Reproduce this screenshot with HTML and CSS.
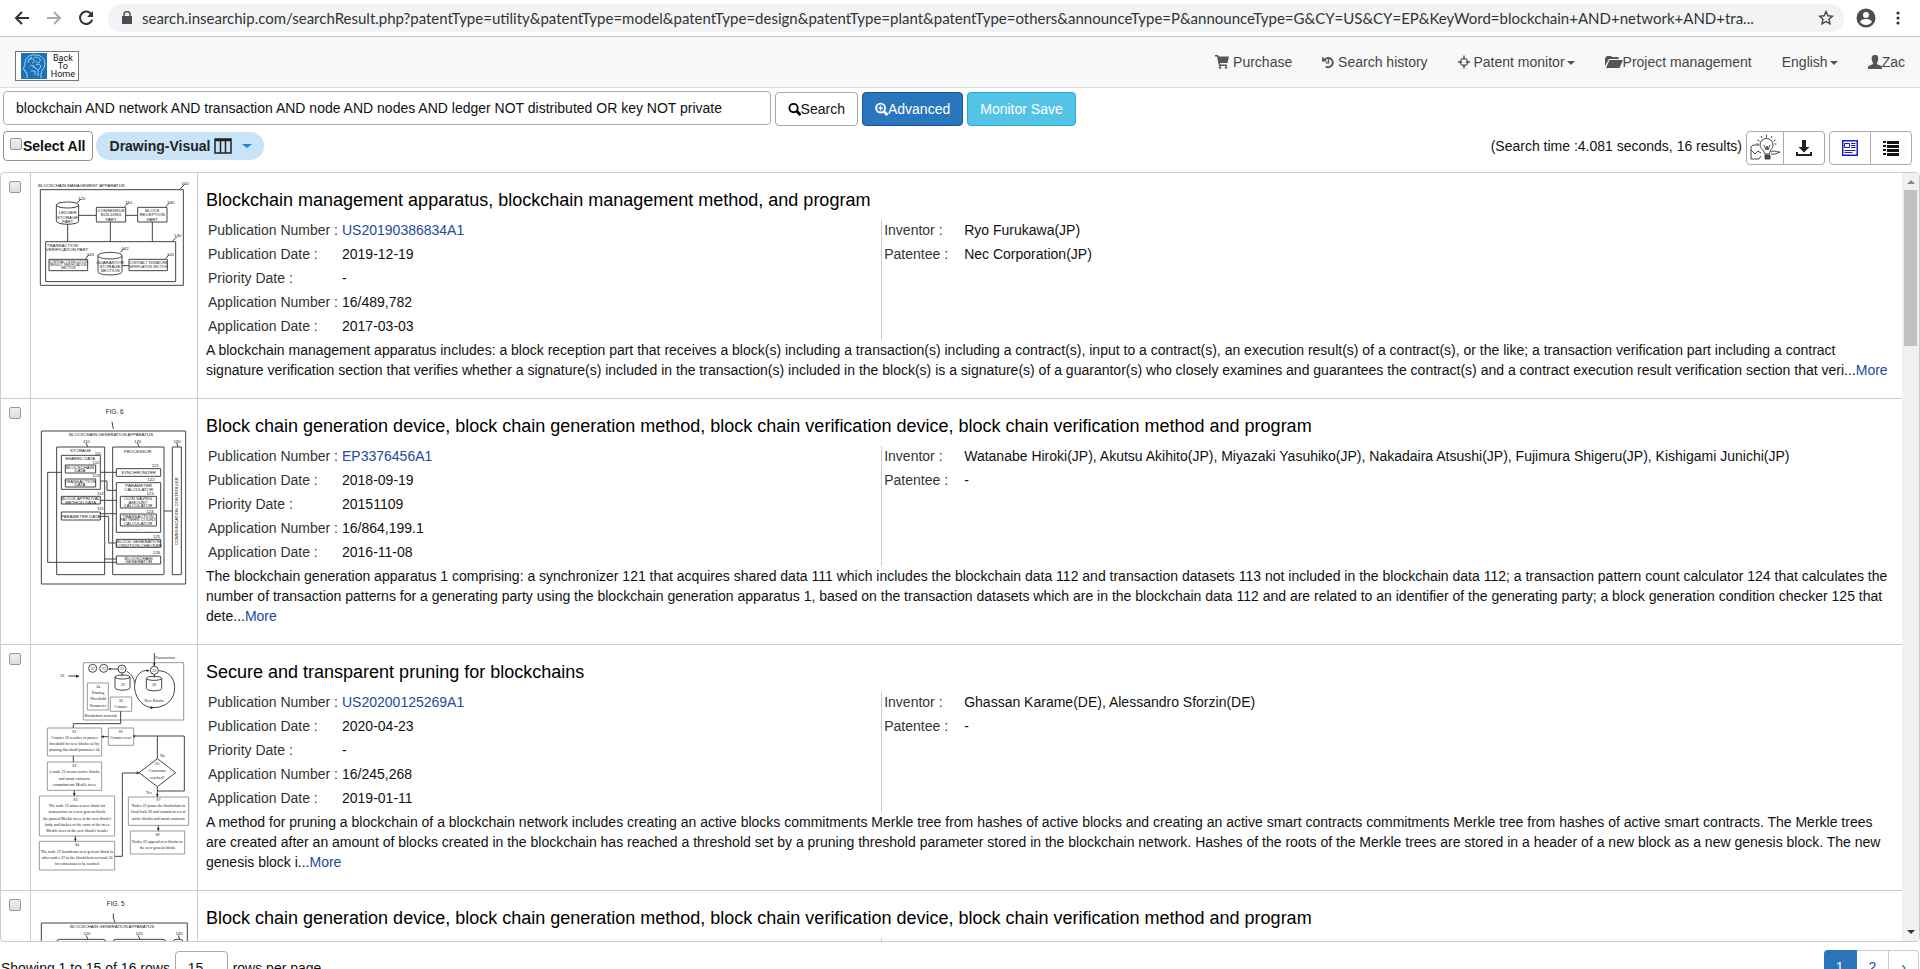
FILE: index.html
```html
<!DOCTYPE html>
<html lang="en">
<head>
    <meta charset="UTF-8">
    <meta name="viewport" content="width=device-width, initial-scale=1.0">
    <title>Search Result</title>
    <link rel="stylesheet" href="styles.css">
</head>
<body>
    <div class="browser-bar">
        <button class="bar-btn" aria-label="Back"><svg width="16" height="16" viewBox="0 0 16 16" fill="none" stroke="#333" stroke-width="2"><path d="M15 8H2M8 2L2 8l6 6"/></svg></button>
        <button class="bar-btn" aria-label="Forward"><svg width="16" height="16" viewBox="0 0 16 16" fill="none" stroke="#aaa" stroke-width="2"><path d="M1 8h13M8 2l6 6-6 6"/></svg></button>
        <button class="bar-btn" aria-label="Reload"><svg width="16" height="16" viewBox="0 0 16 16" fill="none" stroke="#333" stroke-width="2"><path d="M13.500 4.500A6.200 6.200 0 1 0 14.200 9.500"/><path d="M15 1v6H9z" fill="#333" stroke="none"/></svg></button>
        <div class="url-box">
            <svg width="10" height="14" viewBox="0 0 10 14"><path d="M0 5h10v8H0z" fill="#4a4d51"/><path d="M2 6V3.500a3 3 0 0 1 6 0V6" fill="none" stroke="#4a4d51" stroke-width="1.500"/></svg>
            <span class="url">search.insearchip.com/searchResult.php?patentType=utility&amp;patentType=model&amp;patentType=design&amp;patentType=plant&amp;patentType=others&amp;announceType=P&amp;announceType=G&amp;CY=US&amp;CY=EP&amp;KeyWord=blockchain+AND+network+AND+tra...</span>
            <svg width="16" height="16" viewBox="0 0 16 16" fill="none" stroke="#444" stroke-width="1.400"><path d="M8 1.500l1.900 4.300 4.600.4-3.500 3.100 1 4.600L8 11.500l-4 2.400 1-4.600L1.500 6.200l4.600-.4z"/></svg>
        </div>
        <button class="bar-btn" aria-label="Profile"><svg width="20" height="20" viewBox="0 0 20 20"><circle cx="10" cy="10" r="9.500" fill="#4a4d51"/><circle cx="10" cy="7" r="3" fill="#fff"/><path d="M4 14c1-4 11-4 12 0-3 4-9 4-12 0z" fill="#fff"/></svg></button>
        <button class="bar-btn" aria-label="Menu"><svg width="4" height="16" viewBox="0 0 4 16" fill="#333"><circle cx="2" cy="3" r="1.600"/><circle cx="2" cy="8" r="1.600"/><circle cx="2" cy="13" r="1.600"/></svg></button>
    </div>

    <header class="navbar">
        <a href="#" class="home">
            <svg width="26" height="26" viewBox="0 0 26 26">
                <path d="M0 0h26v26H0z" fill="#1a73b8"/>
                <g fill="none" stroke="#a9cfe9" stroke-width="1"><path d="M6 25v-5l-2-1v-2l-2-1 2-4C3 5 9 1 15 2c6 0 9 5 9 9 0 5-4 6-4 10v4M7 10c0-3 3-5 5-4s1 4-1 4M13 5c3-2 7 0 6 3s-4 2-4 0M9 13c2-2 4 0 3 2M15 12c3-2 6 0 4 3s-4 1-4 0M10 18h4v4M17 17v6M7 7l4-3M12 12l3 4"/></g>
            </svg>
            <span>Back<br>To<br>Home</span>
        </a>
        <nav>
            <a href="#"><svg width="14" height="14" viewBox="0 0 14 14" fill="#555"><path d="M0 0h3l.8 1.500H14L12.500 8H5l.3 1.500H12V11H4L2 1.500H0z"/><circle cx="5" cy="12.500" r="1.200"/><circle cx="11" cy="12.500" r="1.200"/></svg> Purchase</a>
            <a href="#"><svg width="12" height="14" viewBox="0 0 13 14" fill="none" stroke="#555" stroke-width="2"><path d="M2.500 5A5 5 0 1 1 4 11.800"/><path d="M0 1v5.500h5.500z" fill="#555" stroke="none"/><path d="M7 4v4H4" stroke-width="1.500"/></svg> Search history</a>
            <a href="#"><svg width="12" height="14" viewBox="0 0 13 14" fill="none" stroke="#555" stroke-width="1.500"><circle cx="6.500" cy="7" r="3.900"/><path d="M6.500 0v4.500M6.500 9.500V14M0 7h4.500M8.500 7H13"/></svg> Patent monitor<i class="caret"></i></a>
            <a href="#"><svg width="18" height="14" viewBox="0 0 18 14" fill="#555"><path d="M0 11V3l2-2h4l1 1h6l1 2H4z"/><path d="M4.500 5H18l-3.500 8H1z"/></svg>Project management</a>
            <a href="#">English<i class="caret"></i></a>
            <a href="#"><svg width="14" height="14" viewBox="0 0 14 14" fill="#555"><path d="M7 0c3 0 3.500 2 3.200 4.500C10 6.500 9 7 9 9c1 1 5 1.500 5 3v2H0v-2c0-1.500 4-2 5-3 0-2-1-2.500-1.200-4.500C3.500 2 4 0 7 0z"/></svg>Zac</a>
        </nav>
    </header>

    <form class="search">
        <input type="text" class="keyword" aria-label="Keyword" value="blockchain AND network AND transaction AND node AND nodes AND ledger NOT distributed OR key NOT private">
        <button type="button" class="btn"><svg width="13" height="14" viewBox="0 0 14 14" fill="none" stroke="#000" stroke-width="2"><circle cx="6" cy="6" r="4.500"/><path d="M9 9l4.500 4.500" stroke-width="3"/></svg>Search</button>
        <button type="button" class="btn btn-primary"><svg width="13" height="14" viewBox="0 0 14 14" fill="none" stroke="#fff" stroke-width="2"><circle cx="6" cy="6" r="4.800"/><path d="M9 9l4.500 4.500" stroke-width="3"/><path d="M6 3.500v5M3.500 6h5" stroke-width="1.500"/></svg>Advanced</button>
        <button type="button" class="btn btn-info">Monitor Save</button>
    </form>

    <div class="toolbar">
        <label class="select-all"><input type="checkbox">Select All</label>
        <button type="button" class="visual">Drawing-Visual
            <svg width="18" height="16" viewBox="0 0 18 16" fill="none" stroke="#222" stroke-width="1.500"><path d="M1 1h16v14H1zM6.500 1v14M11.500 1v14M1 2.500h16"/></svg>
            <i class="caret"></i>
        </button>
        <span class="result-info">(Search time :4.081 seconds, 16 results)</span>
        <div class="btn-group">
            <button type="button" class="btn btn-idea" aria-label="Ideas"><svg width="30" height="26" viewBox="0 0 30 26" fill="none" stroke="#444"><path d="M10 10a6.500 6.500 0 1 1 13 0c0 4-3 4-3.500 9h-5C14 14 10 14 10 10zM14 10l2 5 1-4 1 4 2-5"/><path d="M15 20h5v4h-5z" fill="#444"/><path d="M16.500 0v2.500M11 1l1 2M22 1l-1 2M7.500 5l2 1M25.500 5l-2 1M6.500 9h2M24.500 9h2"/><path d="M9 10H3L1 12v12h8l2-3M1 15l4 4 3-3 3 2M21 17c3-2 5 0 9 0-3 1-5 3-9 2"/></svg></button>
            <button type="button" class="btn" aria-label="Download"><svg width="16" height="16" viewBox="0 0 16 16" fill="#222"><path d="M6 0h4v7h3.500L8 12.500 2.500 7H6zM0 12h2v2h12v-2h2v4H0z"/></svg></button>
        </div>
        <div class="btn-group">
            <button type="button" class="btn" aria-label="Detail view"><svg width="16" height="16" viewBox="0 0 16 16" fill="none" stroke="#1a1acb"><path d="M.75.75h14.500v14.500H.75z" stroke-width="1.500"/><path d="M2.500 3.500h5v4h-5zM9 3.500h4.500M9 5.500h4.500M9 7.500h4.500M2.500 10.500h11M2.500 12.500h8"/></svg></button>
            <button type="button" class="btn" aria-label="List view"><svg width="16" height="16" viewBox="0 0 16 16" fill="#111"><path d="M0 1h3v2H0zM4 1h12v3H4zM0 5h3v2H0zM4 5h12v3H4zM0 9h3v2H0zM4 9h12v3H4zM0 13h3v2H0zM4 13h12v3H4z"/></svg></button>
        </div>
    </div>

    <div class="result-box">
        <div class="result-scroll">
            <table class="results">
                <tr>
                    <td class="pick"><input type="checkbox" aria-label="Select row 1"></td>
                    <td class="drawing">
                        <svg viewBox="93 12 498 360">
                            <path d="M121 62h429v287H121zM137 218h390v120H137zM289 115h88v44h-88zM413 115h88v44h-88zM147 271h116v34H147zM387 271h115v34H387z"/>
                            <path d="M169 108v48c0 13 67 13 67 0v-48M169 108c0-12 67-12 67 0s-67 12-67 0M294 260v48c0 13 72 13 72 0v-48M294 260c0-13 72-13 72 0s-72 13-72 0"/>
                            <path d="M203 165v53M331 159v59M457 159v59M236 139h53M377 139h36M366 290h21M540 60l14-14M232 102l10-12M374 113l12-12M497 113l12-12M518 216l12-12M257 269l10-12M362 250l10-12M497 269l10-12"/>
                            <g class="cap">
                                <text x="244" y="55">BLOCKCHAIN MANAGEMENT APPARATUS</text>
                                <text x="203" y="136">LEDGER</text><text x="203" y="149">STORAGE</text><text x="203" y="162">PART</text>
                                <text x="333" y="129">CONSENSUS</text><text x="333" y="142">BUILDING</text><text x="333" y="155">PART</text>
                                <text x="457" y="129">BLOCK</text><text x="457" y="142">RECEPTION</text><text x="457" y="155">PART</text>
                                <text x="187" y="234">TRANSACTION</text><text x="201" y="247">VERIFICATION PART</text>
                                <text x="330" y="284">GUARANTOR</text><text x="330" y="296">STORAGE</text><text x="330" y="308">SECTION</text>
                                <text x="555" y="49">100</text><text x="245" y="94">120</text><text x="386" y="104">110</text><text x="512" y="104">130</text><text x="533" y="205">140</text><text x="271" y="260">143</text><text x="375" y="243">142</text><text x="512" y="260">141</text>
                            </g>
                            <g class="cap tiny">
                                <text x="205" y="281">CONTRACT EXECUTION</text><text x="205" y="291">RESULT VERIFICATION</text><text x="205" y="301">SECTION</text>
                                <text x="445" y="286">CONTRACT SIGNATURE</text><text x="445" y="298">VERIFICATION SECTION</text>
                            </g>
                        </svg>
                    </td>
                    <td class="detail">
                        <h4>Blockchain management apparatus, blockchain management method, and program</h4>
                        <div class="meta">
                            <dl>
                                <dt>Publication Number :</dt><dd><a href="#">US20190386834A1</a></dd>
                                <dt>Publication Date :</dt><dd>2019-12-19</dd>
                                <dt>Priority Date :</dt><dd>-</dd>
                                <dt>Application Number :</dt><dd>16/489,782</dd>
                                <dt>Application Date :</dt><dd>2017-03-03</dd>
                            </dl>
                            <dl class="people">
                                <dt>Inventor :</dt><dd>Ryo Furukawa(JP)</dd>
                                <dt>Patentee :</dt><dd>Nec Corporation(JP)</dd>
                            </dl>
                        </div>
                        <p>A blockchain management apparatus includes: a block reception part that receives a block(s) including a transaction(s) including a contract(s), input to a contract(s), an execution result(s) of a contract(s), or the like; a transaction verification part including a contract signature verification section that verifies whether a signature(s) included in the transaction(s) included in the block(s) is a signature(s) of a guarantor(s) who closely examines and guarantees the contract(s) and a contract execution result verification section that veri...<a href="#">More</a></p>
                    </td>
                </tr>
                <tr>
                    <td class="pick"><input type="checkbox" aria-label="Select row 2"></td>
                    <td class="drawing">
                        <svg viewBox="93 16 498 570">
                            <path d="M124 112h433v459H124zM170 160h144v383H170zM338 160h154v383H338zM517 160h27v383h-27z"/>
                            <path d="M184 185h117v102H184zM196 214h91v24h-91zM196 256h91v24h-91zM184 308h117v23H184zM184 355h117v24H184zM349 225h133v23H349zM349 267h133v149H349zM361 308h108v35H361zM361 361h108v36H361zM349 437h133v24H349zM349 487h133v24H349z"/>
                            <path d="M184 236h-41v270h206M301 236h48M301 262h20v28h28M301 320h48M301 360h48M301 368h25v80h23M314 496h35M492 352h25M336 84l4 22M258 148l6 12M412 148l6 12M530 148l4 12"/>
                            <g class="cap">
                                <text x="333" y="127">BLOCKCHAIN GENERATION APPARATUS</text>
                                <text x="259" y="147">110</text><text x="413" y="147">120</text><text x="531" y="147">130</text>
                                <text x="242" y="176">STORAGE</text><text x="413" y="179">PROCESSOR</text><text x="240" y="199">SHARED DATA</text>
                                <text x="240" y="225">BLOCKCHAIN</text><text x="240" y="236">DATA</text><text x="240" y="267">TRANSACTION</text><text x="240" y="278">DATA</text>
                                <text x="242" y="319">BLOCK APPROVAL</text><text x="242" y="330">METHOD DATA</text><text x="242" y="372">PARAMETER DATA</text>
                                <text x="416" y="242">SYNCHRONIZER</text><text x="416" y="280">PARAMETER</text><text x="416" y="291">CALCULATOR</text>
                                <text x="414" y="319">COIN SAVING</text><text x="414" y="330">AMOUNT</text><text x="414" y="341">CALCULATOR</text>
                                <text x="414" y="372">TRANSACTION</text><text x="414" y="383">PATTERN COUNT</text><text x="414" y="394">CALCULATOR</text><text x="414" y="408">.....</text>
                                <text x="416" y="448">BLOCK GENERATION</text><text x="416" y="459">CONDITION CHECKER</text><text x="416" y="498">BLOCKCHAIN</text><text x="416" y="509">GENERATOR</text>
                                <text x="294" y="183">111</text><text x="288" y="210">112</text><text x="288" y="251">113</text><text x="301" y="304">114</text><text x="301" y="350">115</text>
                                <text x="466" y="219">121</text><text x="453" y="263">122</text><text x="450" y="304">123</text><text x="450" y="357">124</text><text x="470" y="433">125</text><text x="470" y="482">126</text>
                                <text transform="translate(535 352) rotate(-90)">COMMUNICATION CONTROLLER</text>
                            </g>
                            <text class="fig" x="344" y="60">FIG. 6</text>
                        </svg>
                    </td>
                    <td class="detail">
                        <h4>Block chain generation device, block chain generation method, block chain verification device, block chain verification method and program</h4>
                        <div class="meta">
                            <dl>
                                <dt>Publication Number :</dt><dd><a href="#">EP3376456A1</a></dd>
                                <dt>Publication Date :</dt><dd>2018-09-19</dd>
                                <dt>Priority Date :</dt><dd>20151109</dd>
                                <dt>Application Number :</dt><dd>16/864,199.1</dd>
                                <dt>Application Date :</dt><dd>2016-11-08</dd>
                            </dl>
                            <dl class="people">
                                <dt>Inventor :</dt><dd>Watanabe Hiroki(JP), Akutsu Akihito(JP), Miyazaki Yasuhiko(JP), Nakadaira Atsushi(JP), Fujimura Shigeru(JP), Kishigami Junichi(JP)</dd>
                                <dt>Patentee :</dt><dd>-</dd>
                            </dl>
                        </div>
                        <p>The blockchain generation apparatus 1 comprising: a synchronizer 121 that acquires shared data 111 which includes the blockchain data 112 and transaction datasets 113 not included in the blockchain data 112; a transaction pattern count calculator 124 that calculates the number of transaction patterns for a generating party using the blockchain generation apparatus 1, based on the transaction datasets which are in the blockchain data 112 and are related to an identifier of the generating party; a block generation condition checker 125 that dete...<a href="#">More</a></p>
                    </td>
                </tr>
                <tr>
                    <td class="pick"><input type="checkbox" aria-label="Select row 3"></td>
                    <td class="drawing">
                        <svg viewBox="93 19 498 687">
                            <path class="light" d="M250 72h301v172H250zM262 133h63v81h-63zM331 175h64v43h-64zM142 268h163v84H142zM325 268h76v52h-76zM142 370h163v85H142zM118 472h226v120H118zM118 608h226v86H118zM385 475h181v85H385zM391 577h163v69H391z"/>
                            <path d="M345 115v32c0 10 45 10 45 0v-32M345 115c0-8 45-8 45 0s-45 8-45 0M439 119v30c0 10 46 10 46 0v-30M439 119c0-8 46-8 46 0s-46 8-46 0M472 360l55 42-55 42-55-42z"/>
                            <circle cx="278" cy="89" r="12"/><circle cx="311" cy="89" r="12"/><circle cx="366" cy="91" r="12"/><circle cx="463" cy="95" r="12"/>
                            <path d="M463 43v40M366 103v10M463 107v10M354 91h-26M380 98c14 8 22 20 24 36M447 96c-30-6-45 25-43 55 4 30 25 55 55 56 40 0 65-25 65-60 0-30-20-50-48-51M205 112h32M362 218v37H220v13M220 352v18M223 455v17M226 592v16M325 294h-20M401 292h152v165h-81M472 292v68M472 444v31M475 560v17M344 653h23V403h50"/>
                            <path class="arrow" d="M459 74h8l-4 9zM228 108l10 5-10 4zM219 463h8l-4 9zM468 466h8l-4 9zM471 568h8l-4 9zM222 600h8l-4 8zM410 398l8 5-8 4zM405 288l-6 4 6 5zM311 290l-7 4 7 5zM332 87l-8 4 8 4zM440 92l8 4-8 4zM452 202l8 5-8 5z"/>
                            <g class="cap serif">
                                <text x="495" y="61">Transactions</text><text x="187" y="114">20</text><text x="278" y="93">22</text><text x="311" y="93">22</text><text x="366" y="95">22</text><text x="463" y="99">22</text><text x="368" y="141">26</text><text x="462" y="143">28</text>
                                <text x="294" y="147">24</text><text x="294" y="165">Pruning</text><text x="294" y="185">Threshold</text><text x="294" y="204">Parameter</text>
                                <text x="362" y="189">36</text><text x="362" y="208">Counter</text><text x="462" y="190">New Blocks</text><text x="302" y="236">Blockchain network</text>
                                <text x="223" y="283">S1</text><text x="223" y="302">Counter 26 reaches or passes</text><text x="223" y="320">threshold for new blocks set by</text><text x="223" y="338">pruning threshold parameter 24</text>
                                <text x="362" y="283">S6</text><text x="362" y="302">Counter reset</text>
                                <text x="223" y="384">S2</text><text x="223" y="404">A node 22 creates active blocks</text><text x="223" y="423">and smart contracts</text><text x="223" y="441">commitments Merkle trees</text>
                                <text x="226" y="486">S3</text><text x="231" y="505">The node 22 mines a new block for</text><text x="231" y="524">transactions as a new genesis block</text><text x="231" y="543">the pruned Merkle trees in the new block's</text><text x="231" y="562">body and hashes of the roots of the trees</text><text x="231" y="581">Merkle trees in the new block's header</text>
                                <text x="231" y="622">S4</text><text x="231" y="642">The node 22 broadcasts new genesis block to</text><text x="231" y="661">other nodes 22 in the blockchain network 20</text><text x="231" y="680">for consensus to be reached</text>
                                <text x="472" y="380">S5</text><text x="472" y="400">Consensus</text><text x="472" y="420">reached?</text><text x="487" y="355">No</text><text x="447" y="467">Yes</text>
                                <text x="475" y="488">S7</text><text x="475" y="505">Nodes 22 prune the blockchain in</text><text x="475" y="524">local lock 28 and commit to set of</text><text x="475" y="544">active blocks and smart contracts</text>
                                <text x="472" y="592">S8</text><text x="472" y="612">Nodes 22 append new blocks to</text><text x="472" y="632">the new genesis block</text>
                            </g>
                        </svg>
                    </td>
                    <td class="detail">
                        <h4>Secure and transparent pruning for blockchains</h4>
                        <div class="meta">
                            <dl>
                                <dt>Publication Number :</dt><dd><a href="#">US20200125269A1</a></dd>
                                <dt>Publication Date :</dt><dd>2020-04-23</dd>
                                <dt>Priority Date :</dt><dd>-</dd>
                                <dt>Application Number :</dt><dd>16/245,268</dd>
                                <dt>Application Date :</dt><dd>2019-01-11</dd>
                            </dl>
                            <dl class="people">
                                <dt>Inventor :</dt><dd>Ghassan Karame(DE), Alessandro Sforzin(DE)</dd>
                                <dt>Patentee :</dt><dd>-</dd>
                            </dl>
                        </div>
                        <p>A method for pruning a blockchain of a blockchain network includes creating an active blocks commitments Merkle tree from hashes of active blocks and creating an active smart contracts commitments Merkle tree from hashes of active smart contracts. The Merkle trees are created after an amount of blocks created in the blockchain has reached a threshold set by a pruning threshold parameter stored in the blockchain network. Hashes of the roots of the Merkle trees are stored in a header of a new block as a new genesis block. The new genesis block i...<a href="#">More</a></p>
                    </td>
                </tr>
                <tr>
                    <td class="pick"><input type="checkbox" aria-label="Select row 4"></td>
                    <td class="drawing">
                        <svg viewBox="93 757 498 570">
                            <path d="M124 853h438v459H124zM170 910q0-8 8-8h131q8 0 8 8v370H170zM340 910q0-8 8-8h141q8 0 8 8v370H340zM520 910q0-8 8-8h13q8 0 8 8v370h-29z"/>
                            <path d="M340 824v14l5 13M258 890l6 12M414 890l6 12M535 890l4 12"/>
                            <g class="cap">
                                <text x="336" y="868">BLOCKCHAIN GENERATION APPARATUS</text>
                                <text x="261" y="888">110</text><text x="417" y="888">120</text><text x="537" y="888">130</text>
                            </g>
                            <text class="fig" x="347" y="801">FIG. 5</text>
                        </svg>
                    </td>
                    <td class="detail">
                        <h4>Block chain generation device, block chain generation method, block chain verification device, block chain verification method and program</h4>
                        <div class="meta">
                            <dl></dl>
                            <dl class="people"></dl>
                        </div>
                    </td>
                </tr>
            </table>
        </div>
        <div class="scrollbar">
            <i class="arrow-up"></i>
            <div class="thumb"></div>
            <i class="arrow-down"></i>
        </div>
    </div>

    <footer class="pager">
        <label>Showing 1 to 15 of 16 rows
            <select><option>15</option></select>
            rows per page</label>
        <div class="pages">
            <a href="#" class="active">1</a><a href="#">2</a><a href="#">›</a>
        </div>
    </footer>
</body>
</html>
```

FILE: styles.css
```css
* {
    box-sizing: border-box;
}

body {
    margin: 0;
    height: 100vh;
    overflow: hidden;
    font-family: "Liberation Sans", Arial, sans-serif;
    font-size: 14px;
    line-height: 20px;
    color: #111;
    background-color: #fff;
}

a {
    color: #2349a0;
    text-decoration: none;
}

button, input, select {
    font-family: inherit;
    font-size: 14px;
    color: #111;
}

svg {
    flex: none;
}

/* browser bar */
.browser-bar {
    display: flex;
    align-items: center;
    height: 37px;
    padding: 0 20px 0 14px;
    gap: 16px;
    border-bottom: 1px solid #c5c7cf;
}

.bar-btn {
    display: flex;
    padding: 0;
    border: none;
    background: none;
}

.url-box {
    display: flex;
    flex: 1;
    align-items: center;
    height: 28px;
    min-width: 0;
    margin: 0 -4px 0 -2px;
    padding: 0 10px 0 14px;
    gap: 10px;
    border-radius: 14px;
    background-color: #f1f3f4;
}

.url-box + .bar-btn {
    margin-right: 4px;
}

.url {
    flex: 1;
    overflow: hidden;
    white-space: nowrap;
    font-family: Lato, "Open Sans", sans-serif;
    font-size: 15px;
    color: #333;
}

/* navbar */
.navbar {
    display: flex;
    align-items: center;
    justify-content: space-between;
    height: 51px;
    padding: 0 15px;
    background-color: #f8f8f8;
    border-bottom: 1px solid #dcdcdc;
}

.home {
    display: flex;
    align-items: center;
    justify-content: space-between;
    width: 64px;
    height: 30px;
    margin-top: 8px;
    padding: 0 3px 0 5px;
    border: 1px solid #777;
    background-color: #fff;
    font-family: Roboto, sans-serif;
    font-size: 9px;
    line-height: 8px;
    text-align: center;
    color: #111;
}

.navbar nav {
    display: flex;
    gap: 30px;
}

.navbar nav a {
    color: #444;
    white-space: nowrap;
}

.navbar nav svg {
    vertical-align: -2px;
}

.caret {
    display: inline-block;
    margin-left: 2px;
    vertical-align: middle;
    border-top: 4px solid #555;
    border-left: 4px solid transparent;
    border-right: 4px solid transparent;
}

/* search form */
.search {
    display: flex;
    gap: 4px;
    padding: 3px;
}

.keyword {
    width: calc(40% + 2px);
    height: 34px;
    padding: 0 12px;
    border: 1px solid #aaa;
    border-radius: 4px;
}

.btn {
    display: flex;
    align-items: center;
    justify-content: center;
    height: 34px;
    margin-top: 1px;
    padding: 0 12px;
    border: 1px solid #aaa;
    border-radius: 4px;
    background-color: #fff;
}

.btn-primary {
    color: #fff;
    background-color: #2a76bd;
    border-color: #14559a;
}

.btn-info {
    color: #fff;
    background-color: #55c3e6;
    border-color: #21aed8;
}

/* toolbar */
.toolbar {
    display: flex;
    align-items: flex-start;
    padding: 2px 8px 7px 3px;
}

.select-all {
    display: flex;
    height: 30px;
    margin: 0 3px 0 0;
    padding: 4px 6px;
    line-height: 20px;
    font-weight: bold;
    border: 1px solid #9c8f8f;
    border-radius: 4px;
}

input[type="checkbox"] {
    appearance: none;
    width: 12px;
    height: 12px;
    margin: 0;
    border: 1px solid #999;
    border-radius: 2px;
    background: linear-gradient(#eee, #ddd);
}

.select-all input[type="checkbox"] {
    margin: 2px 1px 0 0;
}

.visual {
    display: flex;
    align-items: center;
    height: 28px;
    margin-top: 1px;
    padding: 0 12px 0 14px;
    gap: 4px;
    border: none;
    border-radius: 14px;
    font-weight: bold;
    color: #222;
    background-color: #c9e3f7;
}

.visual .caret {
    margin-left: 6px;
    border-top-color: #1d86d6;
    border-width: 4px 5px 0;
}

.result-info {
    margin: 5px 4px 0 auto;
}

.btn-group {
    display: flex;
}

.btn-group + .btn-group {
    margin-left: 4px;
}

.btn-group .btn {
    width: 42px;
    margin: 0;
    padding: 0;
}

.btn-group .btn-idea {
    width: 38px;
}

.btn-group .btn:first-child {
    border-radius: 4px 0 0 4px;
}

.btn-group .btn:last-child {
    margin-left: -1px;
    border-radius: 0 4px 4px 0;
}

/* result table */
.result-box {
    display: flex;
    height: calc(100vh - 199px);
    overflow: hidden;
    border: 1px solid #ccc;
    border-radius: 4px;
}

.result-scroll {
    flex: 1;
    overflow: hidden;
}

.results {
    width: 100%;
    table-layout: fixed;
    border-spacing: 0;
}

.results td {
    padding: 0;
    vertical-align: top;
    border-bottom: 1px solid #ccc;
    border-right: 1px solid #ccc;
}

.results .pick {
    width: 30px;
    padding: 8px;
    line-height: 12px;
}

.results .drawing {
    width: 167px;
}

.results .detail {
    padding: 17px 8px 18px;
    border-right: none;
}

.drawing svg {
    display: block;
    width: 100%;
    fill: none;
    stroke: #444;
    stroke-width: 3;
}

.drawing .light {
    stroke: #999;
}

.drawing .arrow {
    fill: #222;
    stroke: none;
}

.drawing text {
    fill: #222;
    stroke: none;
    text-anchor: middle;
}

.drawing .cap text {
    font-size: 13px;
}

.drawing .tiny text {
    font-size: 10px;
}

.drawing .serif text {
    font-family: "Liberation Serif", serif;
    font-size: 12px;
}

.drawing .fig {
    font-size: 19px;
}

.detail h4 {
    margin: 0 0 10px;
    font-size: 18px;
    font-weight: normal;
    line-height: 20px;
    color: #000;
}

.meta {
    display: grid;
    grid-template-columns: 2fr 3fr;
    min-height: 120px;
}

.meta dl {
    display: grid;
    grid-template-columns: 134px 1fr;
    grid-auto-rows: 24px;
    margin: 0;
    padding-left: 2px;
}

.meta .people {
    grid-template-columns: 80px 1fr;
    border-left: 1px solid #ccc;
}

.meta dt {
    color: #333;
}

.meta dd {
    margin: 0;
}

.detail p {
    margin: 0;
}

.scrollbar {
    display: flex;
    flex-direction: column;
    align-items: center;
    width: 17px;
    padding: 7px 0;
    background-color: #f1f1f1;
}

.thumb {
    width: 13px;
    height: 156px;
    margin: 6px 0 auto;
    background-color: #c1c1c1;
}

.arrow-up {
    border-bottom: 4px solid #888;
    border-left: 4px solid transparent;
    border-right: 4px solid transparent;
}

.arrow-down {
    border-top: 4px solid #333;
    border-left: 4px solid transparent;
    border-right: 4px solid transparent;
}

/* pager */
.pager {
    display: flex;
    justify-content: space-between;
    padding: 8px 1px;
}

.pager select {
    appearance: none;
    width: 53px;
    height: 34px;
    margin: 1px 1px 0;
    padding: 0 12px;
    border: 1px solid #aaa;
    border-radius: 4px;
    background-color: #fff;
}

.pages {
    display: flex;
}

.pages a {
    height: 34px;
    padding: 6px 12px;
    border: 1px solid #ccc;
    border-left: none;
}

.pages a:last-child {
    border-radius: 0 4px 4px 0;
}

.pages .active {
    color: #fff;
    background-color: #2a76bd;
    border-color: #2a76bd;
    border-radius: 4px 0 0 4px;
}
```
